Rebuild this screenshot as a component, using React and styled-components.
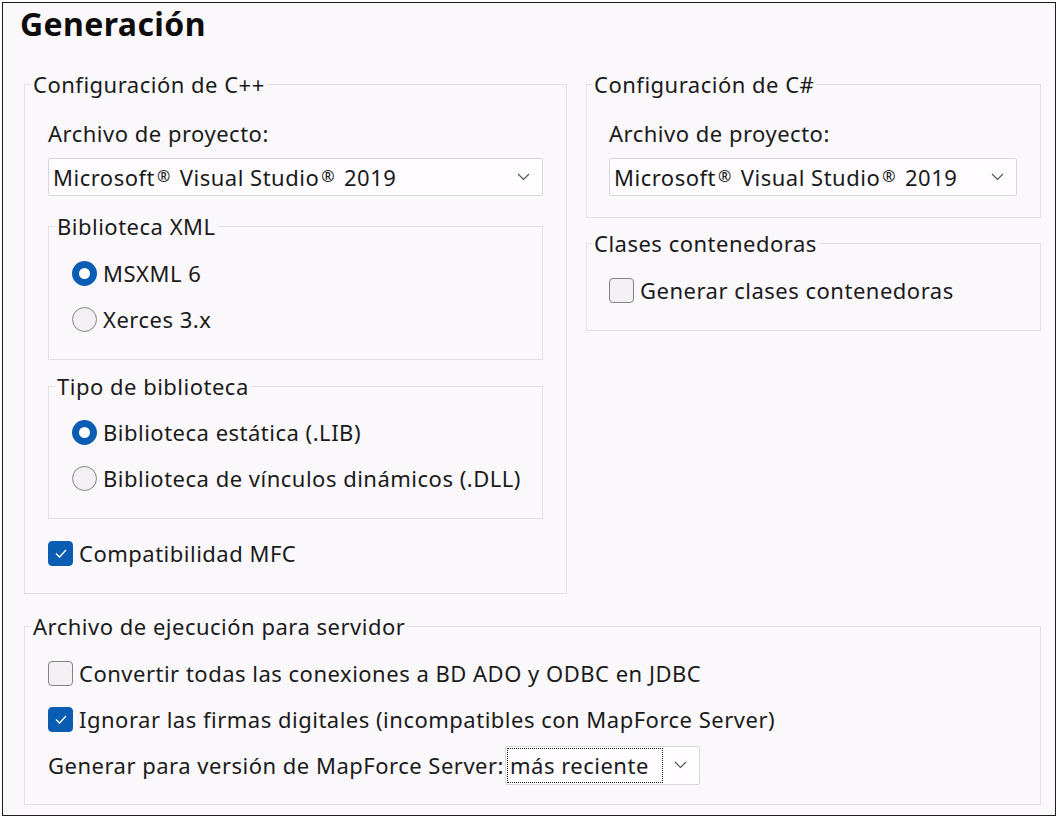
import React from "react";
import styled, { createGlobalStyle } from "styled-components";

const Global = createGlobalStyle`
  html, body { margin: 0; padding: 0; background: #ffffff; }
  body { font-family: "Noto Sans", "Open Sans", sans-serif; color: #1a1a1a; }
  * { box-sizing: border-box; }
`;

const Frame = styled.div`
  margin: 2px;
  width: 1054px;
  height: 814px;
  border: 1px solid #1c1c1c;
  background: #fbf8fb;
  padding: 0 14px 0 21px;
  letter-spacing: 0.5px;
`;

const Title = styled.h1`
  margin: 1px 0 0 -4px;
  font-size: 32px;
  line-height: 40px;
  font-weight: 700;
  letter-spacing: 0.4px;
  color: #0d0d0d;
`;

const Columns = styled.div`
  display: grid;
  grid-template-columns: 543px 455px;
  column-gap: 19px;
  margin-top: 26px;
  align-items: start;
`;

const Stack = styled.div`
  display: flex;
  flex-direction: column;
`;

const Group = styled.fieldset`
  margin: ${(p) => p.$mt || 0}px 0 0 0;
  padding: 0 23px ${(p) => p.$pb || 16}px ${(p) => p.$pl || 23}px;
  border: 1px solid #e2dee2;
  min-width: 0;
`;

const Legend = styled.legend`
  font-size: 22px;
  line-height: 28px;
  padding: 0 2px;
  margin-left: -17px;
  color: #1a1a1a;
`;

const Label = styled.div`
  margin-top: 21px;
  font-size: 22px;
  line-height: 28px;
`;

const Select = styled.div`
  margin-top: ${(p) => p.$mt ?? 11}px;
  height: ${(p) => p.$h || 38}px;
  width: ${(p) => (p.$w ? `${p.$w}px` : "auto")};
  border: 1px solid #d9d5d9;
  border-radius: 2px;
  background: #fefcfe;
  display: flex;
  align-items: center;
  padding: 0 12px 0 4px;
  font-size: 22px;
  flex-shrink: 0;
`;

const SelectText = styled.span`
  flex: 1;
  white-space: nowrap;
`;

const FocusText = styled.span`
  border: 1px dotted #222;
  padding: 0 0 0 2px;
  line-height: 33px;
  width: 156px;
  margin-left: -3px;
`;

const Spacer = styled.span`
  flex: 1;
`;

const Reg = styled.span`
  font-size: 16px;
  vertical-align: 4px;
  margin: 0 9px 0 2px;
`;

const Rows = styled.div`
  margin-top: ${(p) => p.$mt ?? 10}px;
  display: flex;
  flex-direction: column;
`;

const Row = styled.div`
  height: 46px;
  display: flex;
  align-items: center;
  font-size: 22px;
  gap: ${(p) => p.$gap ?? 6}px;
  white-space: nowrap;
`;

const RadioDot = styled.span`
  width: 25px;
  height: 25px;
  border-radius: 50%;
  flex-shrink: 0;
  ${(p) =>
    p.$on
      ? `background: #ffffff; border: 7.5px solid #0a5db3;`
      : `background: #f3f0f3; border: 1px solid #858185;`}
`;

const Box = styled.span`
  width: 25px;
  height: 25px;
  border-radius: 4px;
  flex-shrink: 0;
  display: flex;
  align-items: center;
  justify-content: center;
  ${(p) =>
    p.$on
      ? `background: #0a5db3; border: 1px solid #0a5db3;`
      : `background: #f3f0f3; border: 1px solid #858185;`}
`;

const Chevron = () => (
  <svg width="13" height="8" viewBox="0 0 13 8">
    <path d="M1 1 L6.5 6.5 L12 1" fill="none" stroke="#555" strokeWidth="1.2" />
  </svg>
);

const Check = () => (
  <svg width="14" height="11" viewBox="0 0 14 11">
    <path d="M2 5.5 L5.5 9 L12 2" fill="none" stroke="#fff" strokeWidth="1.4" />
  </svg>
);

const Radio = ({ on, children }) => (
  <Row>
    <RadioDot $on={on} />
    <span>{children}</span>
  </Row>
);

const CheckRow = ({ on, children }) => (
  <Row>
    <Box $on={on}>{on && <Check />}</Box>
    <span>{children}</span>
  </Row>
);

const VS = () => (
  <SelectText>
    Microsoft<Reg>®</Reg>Visual Studio<Reg>®</Reg>2019
  </SelectText>
);

export default function App() {
  return (
    <>
      <Global />
      <Frame>
        <Title>Generación</Title>
        <Columns>
          <Group $pb={17}>
            <Legend>Configuración de C++</Legend>
            <Label>Archivo de proyecto:</Label>
            <Select>
              <VS />
              <Chevron />
            </Select>
            <Group $mt={16} $pb={17}>
              <Legend>Biblioteca XML</Legend>
              <Rows>
                <Radio on>MSXML 6</Radio>
                <Radio>Xerces 3.x</Radio>
              </Rows>
            </Group>
            <Group $mt={12} $pb={17}>
              <Legend>Tipo de biblioteca</Legend>
              <Rows $mt={9}>
                <Radio on>Biblioteca estática (.LIB)</Radio>
                <Radio>Biblioteca de vínculos dinámicos (.DLL)</Radio>
              </Rows>
            </Group>
            <Rows $mt={11}>
              <CheckRow on>Compatibilidad MFC</CheckRow>
            </Rows>
          </Group>
          <Stack>
            <Group $pl={22} $pb={21}>
              <Legend>Configuración de C#</Legend>
              <Label>Archivo de proyecto:</Label>
              <Select>
                <VS />
                <Chevron />
              </Select>
            </Group>
            <Group $mt={11} $pl={22} $pb={17}>
              <Legend>Clases contenedoras</Legend>
              <Rows $mt={10}>
                <CheckRow>Generar clases contenedoras</CheckRow>
              </Rows>
            </Group>
          </Stack>
        </Columns>
        <Group $mt={18} $pb={16}>
          <Legend>Archivo de ejecución para servidor</Legend>
          <Rows>
            <CheckRow>Convertir todas las conexiones a BD ADO y ODBC en JDBC</CheckRow>
            <CheckRow on>Ignorar las firmas digitales (incompatibles con MapForce Server)</CheckRow>
            <Row $gap={1}>
              <span>Generar para versión de MapForce Server:</span>
              <Select $mt={0} $h={39} $w={195}>
                <FocusText>más reciente</FocusText>
                <Spacer />
                <Chevron />
              </Select>
            </Row>
          </Rows>
        </Group>
      </Frame>
    </>
  );
}
